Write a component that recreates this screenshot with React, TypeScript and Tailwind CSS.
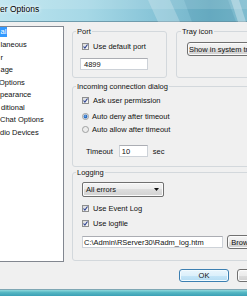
import React from "react";

function Check() {
  return (
    <svg width="7" height="7" viewBox="0 0 7 7" className="shrink-0">
      <defs>
        <linearGradient id="cbg" x1="0" y1="0" x2="1" y2="1">
          <stop offset="0" stopColor="#d8d8d8" />
          <stop offset="1" stopColor="#fafafa" />
        </linearGradient>
      </defs>
      <rect x="0.5" y="0.5" width="6" height="6" fill="url(#cbg)" stroke="#8e8f8f" />
      <path d="M1.5 3.5 L2.9 5.1 L5.5 1.5" fill="none" stroke="#2e4391" strokeWidth="1.1" />
    </svg>
  );
}

function Radio({ checked }: { checked?: boolean }) {
  return (
    <svg width="7" height="7" viewBox="0 0 7 7" className="shrink-0">
      <circle cx="3.5" cy="3.5" r="3.05" fill="#ececec" stroke="#8e8f8f" strokeWidth="0.8" />
      {checked && <circle cx="3.5" cy="3.5" r="1.9" fill="#2a6cc2" />}
      {checked && <circle cx="3.2" cy="3.1" r="0.8" fill="#7fb6ee" />}
    </svg>
  );
}

function CheckRow({ label, className }: { label: string; className: string }) {
  return (
    <div className={`flex items-center h-[9px] pl-[9px] ${className}`}>
      <Check />
      <span className="ml-[4px] whitespace-nowrap">{label}</span>
    </div>
  );
}

function RadioRow({ label, checked, className }: { label: string; checked?: boolean; className: string }) {
  return (
    <div className={`flex items-center h-[9px] pl-[9px] ${className}`}>
      <Radio checked={checked} />
      <span className="ml-[3px] whitespace-nowrap">{label}</span>
    </div>
  );
}

function Group({
  label,
  className,
  labelMl,
  children,
}: {
  label: string;
  className: string;
  labelMl: string;
  children: React.ReactNode;
}) {
  return (
    <div className={`border border-[#d3d8dc] rounded-[3px] flex flex-col shrink-0 ${className}`}>
      <div className={`-mt-[5px] ${labelMl} px-[1px] bg-[#f0f0f0] w-fit h-[9px] leading-[9px] whitespace-nowrap`}>
        {label}
      </div>
      {children}
    </div>
  );
}

const btn =
  "border border-[#707070] rounded-[3px] bg-[linear-gradient(to_bottom,#f4f4f4_0%,#ebebeb_50%,#dddddd_50%,#d0d0d0_100%)] shadow-[inset_0_0_0_1px_#fbfbfb] flex items-center justify-center whitespace-nowrap shrink-0";

const input =
  "bg-white border border-[#cdd2d8] border-t-[#abadb3] flex items-center whitespace-nowrap shrink-0 overflow-hidden";

export default function App() {
  const items = ["laneous", "r", "age"];
  return (
    <div className="w-[247px] h-[296px] overflow-hidden flex flex-col bg-[#f0f0f0] text-[#111] text-[7.5px] leading-[9px] [font-family:'Liberation_Sans',Arial,sans-serif]">
      {/* Title bar */}
      <div className="relative h-[22px] shrink-0 border-b border-[#6f9cad] bg-[linear-gradient(90deg,#bce4ef_0%,#a6d8e6_35%,#8ac6d9_60%,#72b3c8_85%,#7fbccf_100%)]">
        <svg className="absolute inset-0" width="247" height="22" viewBox="0 0 247 22">
          <polygon points="148,0 170,0 180,22 158,22" fill="#ffffff" opacity="0.22" />
          <polygon points="184,0 228,0 236,22 192,22" fill="#2f7f9a" opacity="0.18" />
          <polygon points="231,0 239,0 246,22 238,22" fill="#ffffff" opacity="0.3" />
          <rect x="0" y="0" width="247" height="9" fill="#ffffff" opacity="0.12" />
        </svg>
        <div className="relative pt-[4px] text-[8.5px] leading-[10px] text-black whitespace-nowrap [text-shadow:0_0_5px_#ffffff,0_0_3px_#ffffff]">
          er Options
        </div>
      </div>

      {/* Body */}
      <div className="flex-1 flex flex-col">
        <div className="mt-[4px] flex items-start">
          {/* Left list */}
          <div className="w-[64px] h-[236px] shrink-0 bg-white border-t border-r border-b border-[#828790] flex flex-col overflow-hidden">
            <div className="-mt-[1px] h-[12.5px] flex items-center">
              <span className="bg-[#3399ff] text-white pl-[0.5px] pr-[1px] leading-[10px]">al</span>
            </div>
            {items.map((t) => (
              <div key={t} className="h-[12.5px] flex items-center whitespace-nowrap pl-[0.5px]">
                {t}
              </div>
            ))}
            <div className="h-[12.5px] flex items-center whitespace-nowrap -ml-[1px]">Options</div>
            <div className="h-[12.5px] flex items-center whitespace-nowrap">pearance</div>
            <div className="h-[12.5px] flex items-center whitespace-nowrap pl-[1px]">ditional</div>
            <div className="h-[12.5px] flex items-center whitespace-nowrap">Chat Options</div>
            <div className="h-[12.5px] flex items-center whitespace-nowrap">dio Devices</div>
          </div>

          {/* Right column */}
          <div className="ml-[8px] w-[190px] shrink-0 flex flex-col">
            <div className="flex items-start">
              <Group label="Port" className="mt-[5px] w-[95px] h-[47px]" labelMl="ml-[3px]">
                <CheckRow label="Use default port" className="mt-[6px]" />
                <div className={`${input} mt-[7px] ml-[7px] w-[68px] h-[12px] pl-[3px]`}>4899</div>
              </Group>
              <Group label="Tray icon" className="mt-[5px] ml-[9px] w-[90px] h-[47px]" labelMl="ml-[4px]">
                <div className={`${btn} mt-[6px] ml-[10px] w-[71px] h-[14px]`}>Show in system tray</div>
              </Group>
            </div>

            <Group label="Incoming connection dialog" className="mt-[8px] w-[190px] h-[81px]" labelMl="ml-[3px]">
              <CheckRow label="Ask user permission" className="mt-[5px]" />
              <RadioRow label="Auto deny after timeout" checked className="mt-[7px]" />
              <RadioRow label="Auto allow after timeout" className="mt-[4px]" />
              <div className="mt-[11px] h-[12px] flex items-center pl-[13px]">
                <span>Timeout</span>
                <div className={`${input} ml-[6px] w-[29px] h-[12px] pl-[2px]`}>10</div>
                <span className="ml-[5px]">sec</span>
              </div>
            </Group>

            <Group label="Logging" className="mt-[5px] w-[190px] h-[89px]" labelMl="ml-[3px]">
              <div className="mt-[5px] ml-[9px] w-[82px] h-[15px] shrink-0 border border-[#707070] rounded-[2px] bg-[linear-gradient(to_bottom,#f4f4f4_0%,#ebebeb_50%,#dddddd_50%,#d2d2d2_100%)] shadow-[inset_0_0_0_1px_#fbfbfb] flex items-center justify-between pl-[3px] pr-[4px]">
                <span className="whitespace-nowrap">All errors</span>
                <svg width="5" height="3" viewBox="0 0 5 3">
                  <polygon points="0,0 5,0 2.5,3" fill="#111" />
                </svg>
              </div>
              <CheckRow label="Use Event Log" className="mt-[7px]" />
              <CheckRow label="Use logfile" className="mt-[6px]" />
              <div className="mt-[7px] h-[14px] flex items-center pl-[9px]">
                <div className={`${input} w-[141px] h-[12px] pl-[1px]`}>C:\Admin\RServer30\Radm_log.htm</div>
                <div className={`${btn} ml-[4px] w-[40px] h-[14px]`}>Browse...</div>
              </div>
            </Group>
          </div>
        </div>

        {/* Buttons */}
        <div className="mt-[7px] flex pl-[179px] gap-[8px]">
          <div className="w-[50px] h-[13px] shrink-0 border border-[#3c7fb1] rounded-[3px] bg-[linear-gradient(to_bottom,#eaf6fd_0%,#dcf0fb_50%,#c6e6f8_50%,#b4dcf3_100%)] shadow-[inset_0_0_0_1px_#f2fbff] flex items-center justify-center">
            OK
          </div>
          <div className={`${btn} w-[50px] h-[13px]`}>Cancel</div>
        </div>
      </div>

      {/* Bottom frame */}
      <div className="h-[7px] shrink-0 border-t border-[#7fa7b4] bg-[linear-gradient(to_bottom,#8fd8dc_0%,#56b8c4_40%,#3a9fb5_100%)]" />
    </div>
  );
}
